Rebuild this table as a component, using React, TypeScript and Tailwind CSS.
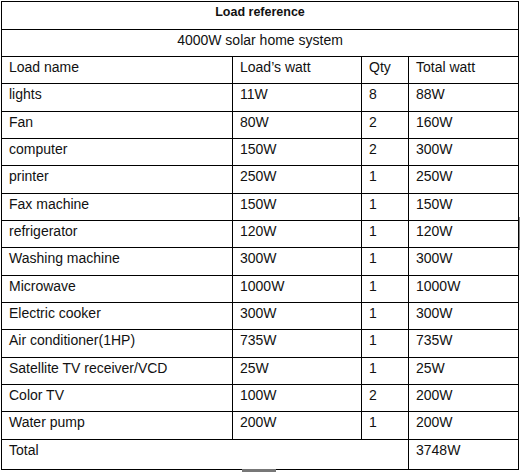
const rows = [
  { name: "lights", watt: "11W", qty: "8", total: "88W" },
  { name: "Fan", watt: "80W", qty: "2", total: "160W" },
  { name: "computer", watt: "150W", qty: "2", total: "300W" },
  { name: "printer", watt: "250W", qty: "1", total: "250W" },
  { name: "Fax machine", watt: "150W", qty: "1", total: "150W" },
  { name: "refrigerator", watt: "120W", qty: "1", total: "120W" },
  { name: "Washing machine", watt: "300W", qty: "1", total: "300W" },
  { name: "Microwave", watt: "1000W", qty: "1", total: "1000W" },
  { name: "Electric cooker", watt: "300W", qty: "1", total: "300W" },
  { name: "Air conditioner(1HP)", watt: "735W", qty: "1", total: "735W" },
  { name: "Satellite TV receiver/VCD", watt: "25W", qty: "1", total: "25W" },
  { name: "Color TV", watt: "100W", qty: "2", total: "200W" },
  { name: "Water pump", watt: "200W", qty: "1", total: "200W" },
];

// row heights follow the 28/27/27 rhythm of the original grid
const heights = [28, 27, 27, 28, 27, 27, 28, 27, 27, 28, 27, 27, 28];

const cell = "border border-black align-top pt-[2px] px-[7px] leading-4";

export default function App() {
  return (
    <div className="relative w-[520px] h-[472px] bg-white text-[#111] text-[14px] font-['Liberation_Sans',Arial,sans-serif] overflow-hidden">
      <table className="ml-px mt-px w-[517px] table-fixed border-collapse">
        <colgroup>
          <col className="w-[231px]" />
          <col className="w-[129px]" />
          <col className="w-[47px]" />
          <col className="w-[110px]" />
        </colgroup>
        <tbody>
          <tr className="h-[28px]">
            <td colSpan={4} className={`${cell} text-center font-bold text-[12.5px]`}>
              Load reference
            </td>
          </tr>
          <tr className="h-[27px]">
            <td colSpan={4} className={`${cell} text-center`}>
              4000W solar home system
            </td>
          </tr>
          <tr className="h-[27px]">
            <td className={cell}>Load name</td>
            <td className={cell}>Load’s watt</td>
            <td className={cell}>Qty</td>
            <td className={cell}>Total watt</td>
          </tr>
          {rows.map((r, i) => (
            <tr key={r.name} style={{ height: heights[i] }}>
              <td className={cell}>{r.name}</td>
              <td className={cell}>{r.watt}</td>
              <td className={cell}>{r.qty}</td>
              <td className={cell}>{r.total}</td>
            </tr>
          ))}
          <tr className="h-[30px]">
            <td colSpan={3} className={cell}>Total</td>
            <td className={cell}>3748W</td>
          </tr>
        </tbody>
      </table>

      {/* stray marks at the screenshot's edges */}
      <div className="absolute left-[519px] top-[217px] w-px h-[33px] bg-[#8a8a8a]" />
      <div className="absolute left-[242px] top-[469px] w-[34px] h-[3px] bg-[#777]" />
    </div>
  );
}
